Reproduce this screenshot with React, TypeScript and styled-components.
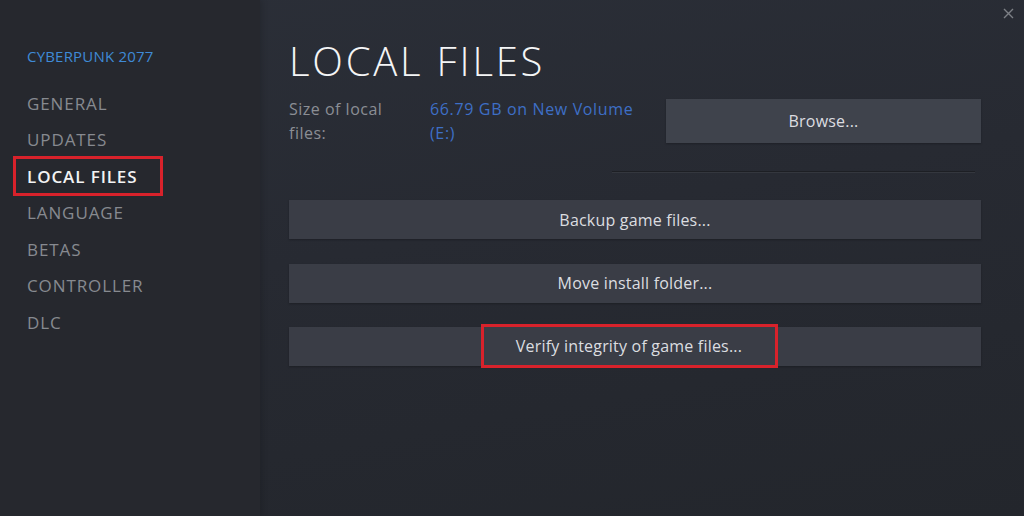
import React from 'react';
import styled, { createGlobalStyle } from 'styled-components';

const GlobalStyle = createGlobalStyle`
  html, body {
    margin: 0;
    padding: 0;
    background: #24272e;
  }
  body {
    font-family: 'Open Sans', 'Liberation Sans', sans-serif;
  }
`;

const Window = styled.div`
  position: relative;
  display: flex;
  flex-direction: row;
  width: 1024px;
  height: 516px;
  overflow: hidden;
  background: linear-gradient(
    170deg,
    #2b2f38 0%,
    #272a32 45%,
    #23262c 100%
  );
`;

const Sidebar = styled.nav`
  display: flex;
  flex-direction: column;
  width: 260px;
  flex-shrink: 0;
  padding: 45px 0 0 13px;
  box-sizing: border-box;
  background: #26282e;
  box-shadow: 2px 0 6px rgba(0, 0, 0, 0.15);
`;

const GameTitle = styled.div`
  padding-left: 14px;
  margin-bottom: 18px;
  font-size: 15px;
  letter-spacing: 0.2px;
  color: #3f8ad6;
  line-height: 22px;
`;

const NavItem = styled.div<{ $active?: boolean }>`
  display: flex;
  align-items: center;
  width: 150px;
  box-sizing: border-box;
  padding-left: 11px;
  font-size: 17px;
  letter-spacing: 0.9px;
  font-weight: ${(p) => (p.$active ? 600 : 400)};
  color: ${(p) => (p.$active ? '#f2f3f4' : '#878a90')};
  border: 3px solid ${(p) => (p.$active ? '#d8222b' : 'transparent')};
  height: ${(p) => (p.$active ? '40px' : '36.5px')};
  margin: ${(p) => (p.$active ? '-1.75px 0' : '0')};
`;

const Main = styled.main`
  display: flex;
  flex-direction: column;
  flex: 1;
  padding: 34px 43px 0 29px;
`;

const CloseButton = styled.div`
  position: absolute;
  top: 6px;
  right: 9px;
  width: 14px;
  height: 14px;
  display: flex;
  align-items: center;
  justify-content: center;
`;

const Title = styled.h1`
  margin: 0;
  font-size: 40px;
  font-weight: 300;
  letter-spacing: 2.8px;
  line-height: 54px;
  color: #f4f5f6;
`;

const InfoRow = styled.div`
  display: grid;
  grid-template-columns: 141px 236px 1fr;
  align-items: start;
  margin-top: 11px;
`;

const Label = styled.div`
  font-size: 16px;
  line-height: 24px;
  letter-spacing: 0.5px;
  color: #8b8e94;
  margin-top: -2px;
`;

const Value = styled.div`
  font-size: 16px;
  line-height: 24px;
  letter-spacing: 0.65px;
  color: #3e6fc6;
  margin-top: -2px;
`;

const Button = styled.div<{ $height?: number }>`
  display: flex;
  align-items: center;
  justify-content: center;
  height: ${(p) => p.$height ?? 39}px;
  background: #3a3d46;
  color: #dcdde0;
  font-size: 16px;
  letter-spacing: 0.2px;
  box-shadow: 0 1px 2px rgba(0, 0, 0, 0.25);
`;

const BrowseButton = styled(Button)`
  background: #3f434c;
`;

const Divider = styled.div`
  height: 1px;
  margin: 27px 6px 0 323px;
  background: #34373e;
  box-shadow: 0 -1px 0 #1d1f24;
`;

const ButtonList = styled.div`
  display: flex;
  flex-direction: column;
  gap: 24.5px;
  margin-top: 27px;
`;

const Highlight = styled.span`
  display: inline-flex;
  align-items: center;
  justify-content: center;
  width: 297px;
  height: 44px;
  box-sizing: border-box;
  border: 3px solid #d8222b;
  margin-left: -12px;
  margin-top: -1px;
`;

const navItems = [
  'GENERAL',
  'UPDATES',
  'LOCAL FILES',
  'LANGUAGE',
  'BETAS',
  'CONTROLLER',
  'DLC',
];

const App = () => {
  return (
    <>
      <GlobalStyle />
      <Window>
        <Sidebar>
          <GameTitle>CYBERPUNK 2077</GameTitle>
          {navItems.map((item) => (
            <NavItem key={item} $active={item === 'LOCAL FILES'}>
              {item}
            </NavItem>
          ))}
        </Sidebar>
        <Main>
          <Title>LOCAL FILES</Title>
          <InfoRow>
            <Label>
              Size of local
              <br />
              files:
            </Label>
            <Value>
              66.79 GB on New Volume
              <br />
              (E:)
            </Value>
            <BrowseButton $height={44}>Browse...</BrowseButton>
          </InfoRow>
          <Divider />
          <ButtonList>
            <Button>Backup game files...</Button>
            <Button>Move install folder...</Button>
            <Button>
              <Highlight>Verify integrity of game files...</Highlight>
            </Button>
          </ButtonList>
        </Main>
        <CloseButton>
          <svg width='11' height='11' viewBox='0 0 11 11'>
            <path
              d='M1 1 L10 10 M10 1 L1 10'
              stroke='#7d8086'
              strokeWidth='1.4'
              fill='none'
            />
          </svg>
        </CloseButton>
      </Window>
    </>
  );
};

export default App;
